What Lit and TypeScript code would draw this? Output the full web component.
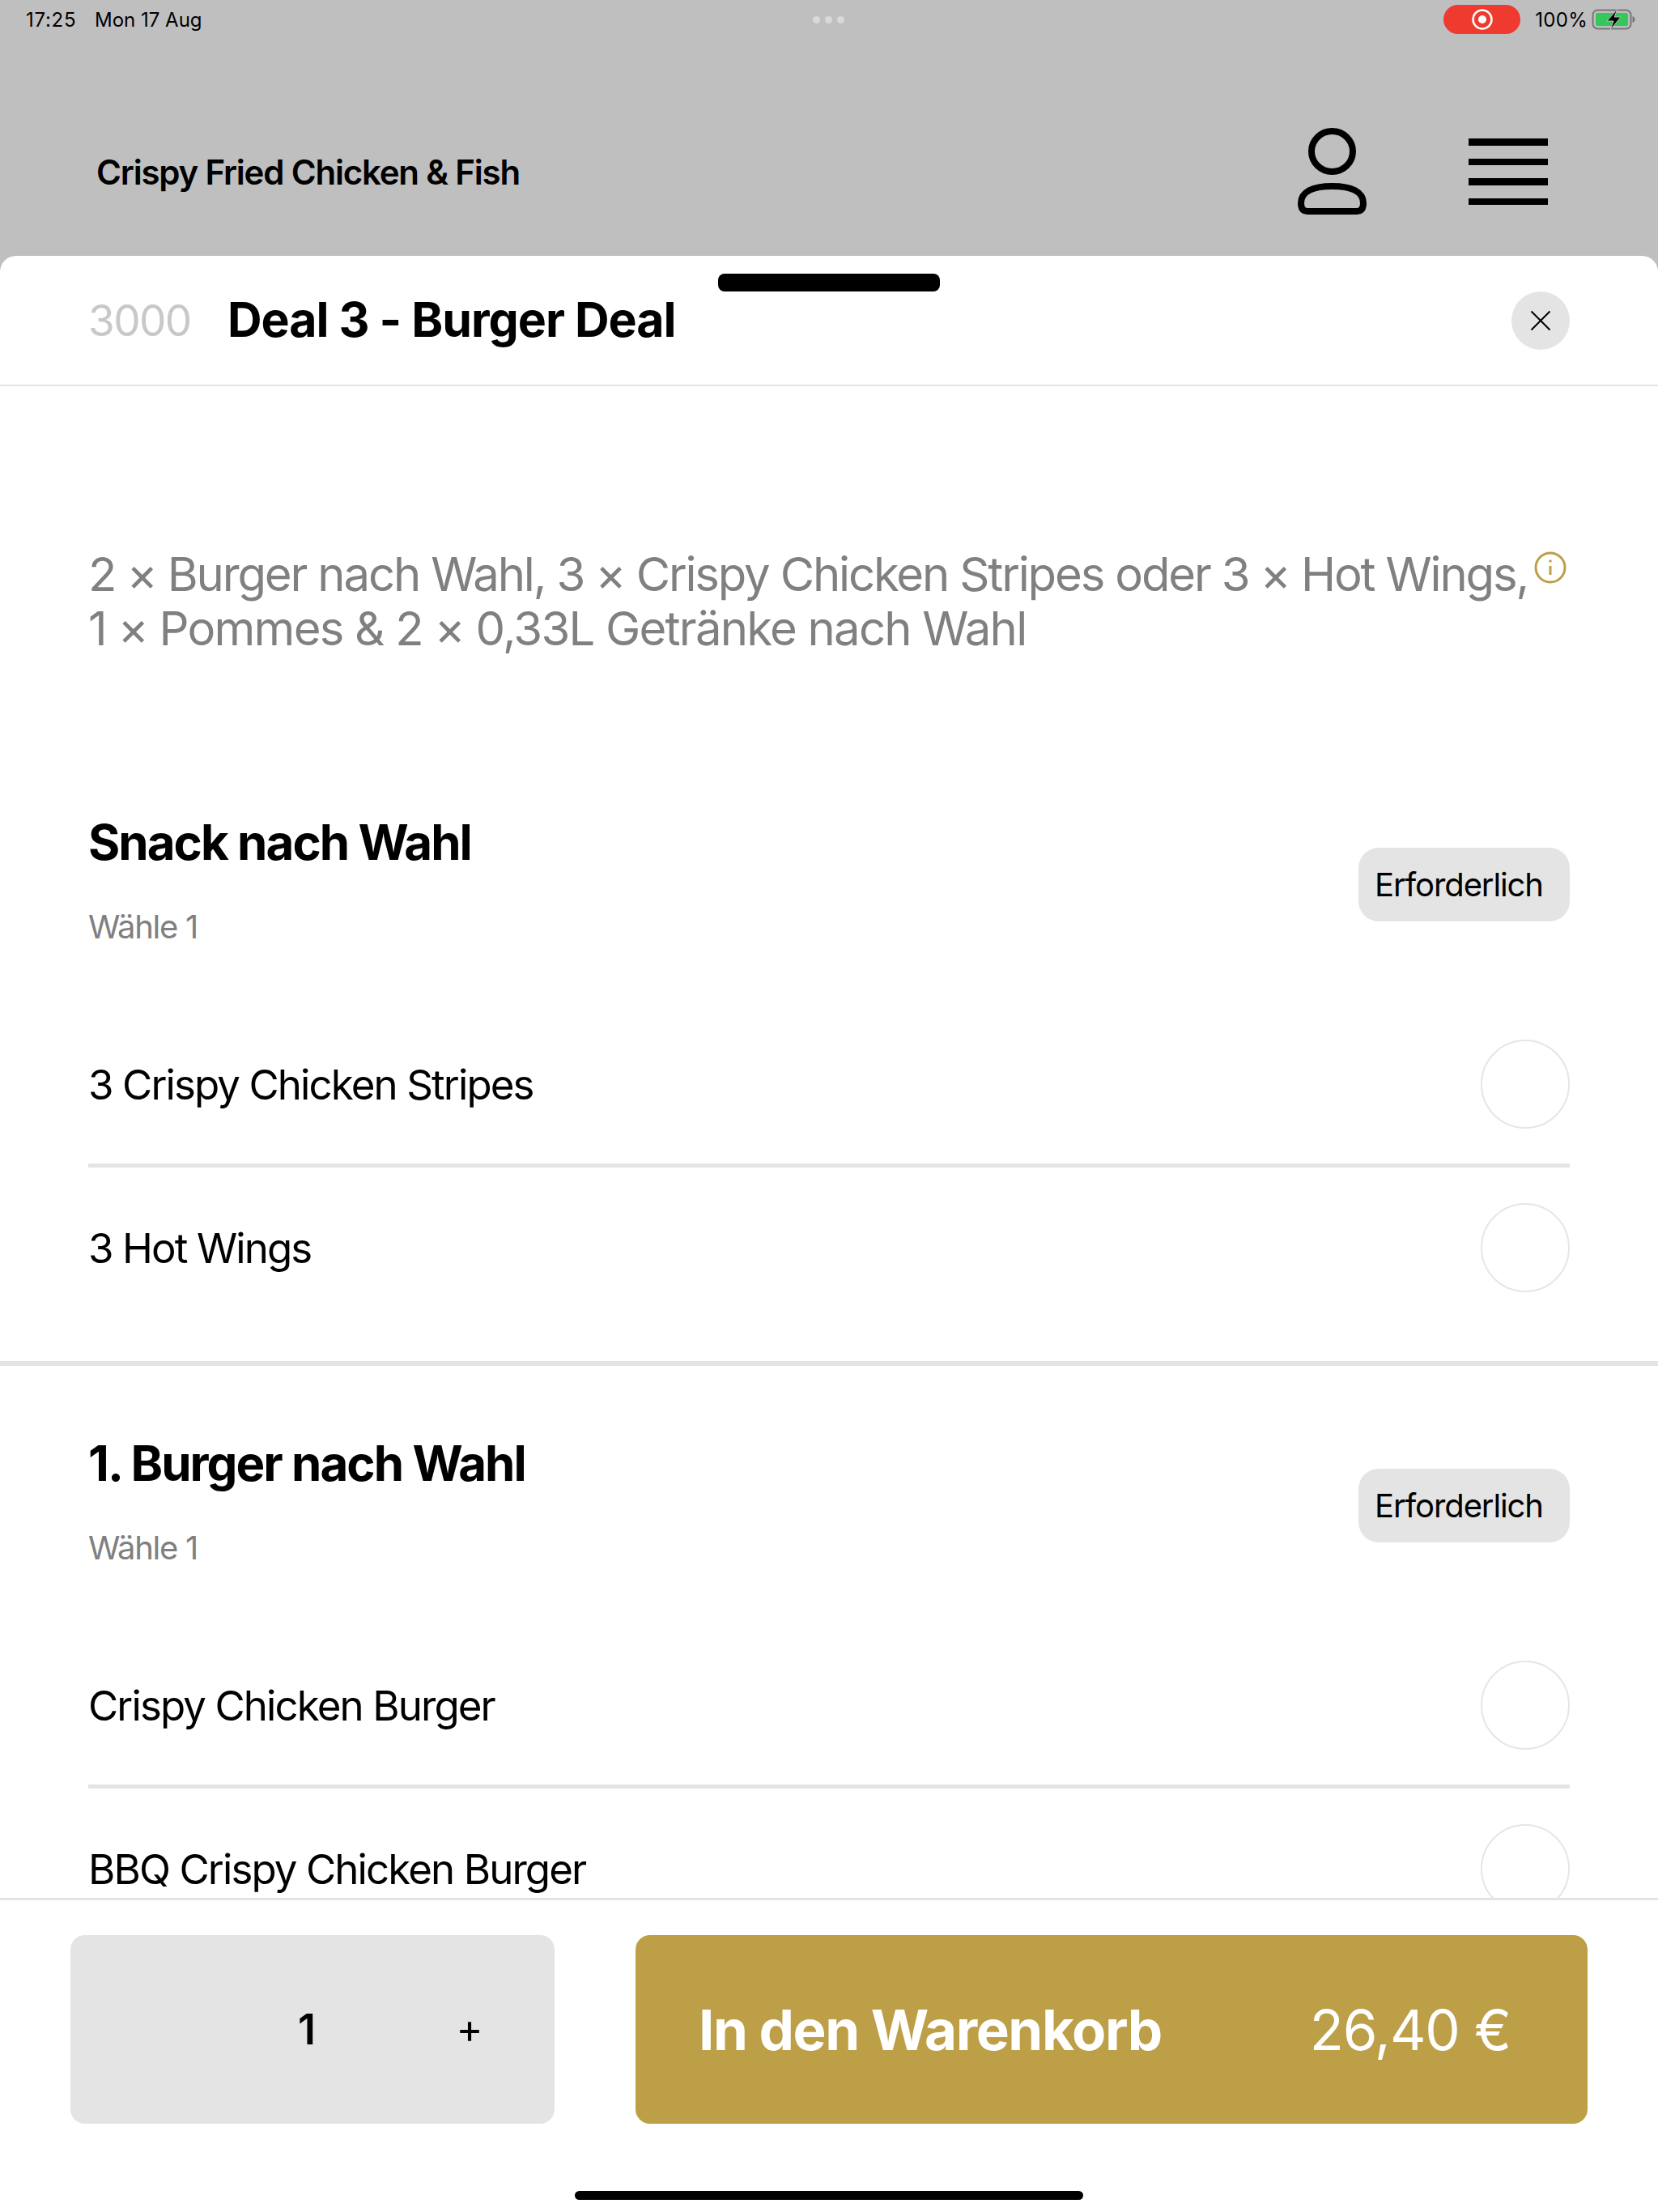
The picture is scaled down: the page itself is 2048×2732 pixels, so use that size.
import { LitElement, html, css } from "lit";
import { customElement } from "lit/decorators.js";

@customElement("app-root")
export class AppRoot extends LitElement {
  static styles = css`
    :host { display: block; width: 2048px; height: 2732px; position: relative; overflow: hidden; background: #bfbfbf; font-family: Inter, "Liberation Sans", sans-serif; color: #000; }
    .page { height: 2732px; display: flex; flex-direction: column; }
    .status { height: 48px; box-sizing: border-box; display: flex; align-items: center; padding: 0 28px 0 32px; font-size: 24px; position: relative; flex: none; }
    .time { width: 85px; letter-spacing: 0.7px; }
    .spacer { flex: 1; }
    .dots { position: absolute; left: 1004px; top: 20px; display: flex; gap: 6px; }
    .dots i { width: 9px; height: 9px; border-radius: 50%; background: #d9d9d9; display: block; }
    .rec { width: 95px; height: 36px; border-radius: 18px; background: #ee3a2f; display: flex; align-items: center; justify-content: center; margin-right: 18px; }
    .pct { margin-right: 3px; letter-spacing: 0.3px; }
    .top { height: 268px; box-sizing: border-box; flex: none; display: flex; align-items: center; padding: 60px 136px 0 119px; }
    .brand { flex: 1; font-size: 42px; font-weight: 600; letter-spacing: -1.2px; }
    .person { margin-right: 126px; display: block; }
    .menu { width: 98px; display: flex; flex-direction: column; gap: 16px; }
    .menu i { display: block; height: 8.5px; background: #000; }
    .sheet { flex: 1; min-height: 0; background: #fff; border-radius: 20px 20px 0 0; display: flex; flex-direction: column; position: relative; }
    .handle { position: absolute; left: 887px; top: 22px; width: 274px; height: 22px; border-radius: 8px; background: #000; }
    .head { flex: none; height: 159px; border-bottom: 2px solid #e4e4e4; display: flex; align-items: center; padding: 0 109px; }
    .code { font-size: 53px; color: #c8c8c8; width: 172px; letter-spacing: -1.6px; }
    .title { flex: 1; font-size: 59px; font-weight: 700; letter-spacing: -1px; padding-bottom: 2px; }
    .close { width: 72px; height: 72px; border-radius: 50%; background: #e4e4e4; display: flex; align-items: center; justify-content: center; }
    .scroll { flex: 1; min-height: 0; overflow: hidden; }
    .desc { display: flex; align-items: flex-start; padding: 199px 113px 110px 109px; font-size: 58px; line-height: 67px; color: #808080; white-space: nowrap; }
    .desc p { margin: 0; flex: 1; }
    .l1 { letter-spacing: -2.15px; }
    .l2 { letter-spacing: -1.76px; }
    .info { flex: none; margin-top: 5px; display: block; }
    .section { padding: 0 109px 40px; border-bottom: 6px solid #e4e4e4; }
    .shead { height: 318px; display: flex; justify-content: space-between; align-items: flex-start; }
    .stitle { margin: 85px 0 0; font-size: 60px; line-height: 70px; font-weight: 700; letter-spacing: -1.95px; }
    .pick { margin-top: 45px; font-size: 40px; line-height: 50px; color: #808080; letter-spacing: -1.3px; }
    .badge { margin-top: 127px; width: 261px; height: 91px; box-sizing: border-box; padding-left: 20px; display: flex; align-items: center; border-radius: 25px; background: #e4e4e4; font-size: 40px; letter-spacing: -1.1px; }
    .row { height: 110px; padding: 46px 0; display: flex; align-items: center; justify-content: space-between; font-size: 51px; letter-spacing: -1.9px; }
    .row.line { padding-bottom: 43px; border-bottom: 5px solid #e4e4e4; margin-bottom: -2px; }
    .row.last { padding-bottom: 45px; }
    .radio { width: 110px; height: 110px; box-sizing: border-box; border-radius: 50%; border: 2px solid #e6e6e6; }
    .foot { flex: none; height: 388px; box-sizing: border-box; border-top: 3px solid #e4e4e4; padding: 43px 87px 0; display: flex; gap: 100px; align-items: flex-start; background: #fff; }
    .qty { width: 598px; height: 233px; box-sizing: border-box; padding-right: 4px; border-radius: 18px; background: #e4e4e4; display: grid; grid-template-columns: 192px 200px 202px; align-items: center; justify-items: center; }
    .n { font-size: 52px; font-weight: 600; }
    .plus { font-size: 50px; padding-bottom: 3px; }
    .cart { flex: 1; height: 233px; box-sizing: border-box; border-radius: 18px; background: #bd9f48; color: #fff; display: flex; align-items: center; justify-content: space-between; padding: 0 95px 0 78px; font-size: 69px; letter-spacing: -1.1px; }
    .cart b { font-weight: 700; letter-spacing: -1.4px; }
    .home { position: absolute; left: 710px; top: 2706px; width: 628px; height: 11px; border-radius: 6px; background: #000; }
  `;

  private section(title: string, rows: string[]) {
    return html`<div class="section">
      <div class="shead">
        <div><h2 class="stitle">${title}</h2><div class="pick">Wähle 1</div></div>
        <div class="badge">Erforderlich</div>
      </div>
      ${rows.map((r, i) => html`<div class="row ${i < rows.length - 1 ? "line" : "last"}"><span>${r}</span><span class="radio"></span></div>`)}
    </div>`;
  }

  render() {
    return html`<div class="page">
      <div class="status">
        <span class="time">17:25</span><span>Mon 17 Aug</span><span class="spacer"></span>
        <div class="dots"><i></i><i></i><i></i></div>
        <div class="rec"><svg width="28" height="28" viewBox="0 0 28 28"><circle cx="14" cy="14" r="11.5" fill="none" stroke="#fff" stroke-width="2.5"/><circle cx="14" cy="14" r="5" fill="#fff"/></svg></div>
        <span class="pct">100%</span>
        <svg width="56" height="30" viewBox="0 0 56 30">
          <rect x="3.500" y="3.500" width="47" height="23" rx="6" fill="none" stroke="#777" stroke-width="2"/>
          <rect x="7" y="7" width="40" height="16" rx="2.500" fill="#34c759"/>
          <path d="M52.500 11q3 1 3 4t-3 4z" fill="#777"/>
          <path d="M34 2 21 17h8l-4 11 13-16h-8z" fill="#000" stroke="#bfbfbf" stroke-width="1"/>
        </svg>
      </div>
      <div class="top">
        <div class="brand">Crispy Fried Chicken &amp; Fish</div>
        <svg class="person" width="85" height="108" viewBox="0 0 85 108" fill="none" stroke="#000" stroke-width="8">
          <ellipse cx="42.500" cy="29" rx="25.500" ry="25"/>
          <path d="M12 103h61q8 0 8-10c0-14-14-21-38.500-21S4 79 4 93q0 10 8 10z"/>
        </svg>
        <div class="menu"><i></i><i></i><i></i><i></i></div>
      </div>
      <div class="sheet">
        <div class="handle"></div>
        <div class="head">
          <div class="code">3000</div>
          <div class="title">Deal 3 - Burger Deal</div>
          <div class="close"><svg width="26" height="26" viewBox="0 0 26 26" stroke="#000" stroke-width="2" fill="none"><path d="M1.500 1.500 24.500 24.500M24.500 1.500 1.500 24.500"/></svg></div>
        </div>
        <div class="scroll">
          <div class="desc">
            <p><span class="l1">2 × Burger nach Wahl, 3 × Crispy Chicken Stripes oder 3 × Hot Wings,</span><br><span class="l2">1 × Pommes &amp; 2 × 0,33L Getränke nach Wahl</span></p>
            <svg class="info" width="40" height="40" viewBox="0 0 40 40" fill="none" stroke="#bd9f48" stroke-width="3"><circle cx="20" cy="20" r="18"/><path d="M20 18v11"/><circle cx="20" cy="12" r="1.800" fill="#bd9f48" stroke="none"/></svg>
          </div>
          ${this.section("Snack nach Wahl", ["3 Crispy Chicken Stripes", "3 Hot Wings"])}
          ${this.section("1. Burger nach Wahl", ["Crispy Chicken Burger", "BBQ Crispy Chicken Burger"])}
        </div>
        <div class="foot">
          <div class="qty"><span></span><span class="n">1</span><span class="plus">+</span></div>
          <div class="cart"><b>In den Warenkorb</b><span>26,40 €</span></div>
        </div>
      </div>
      <div class="home"></div>
    </div>`;
  }
}
